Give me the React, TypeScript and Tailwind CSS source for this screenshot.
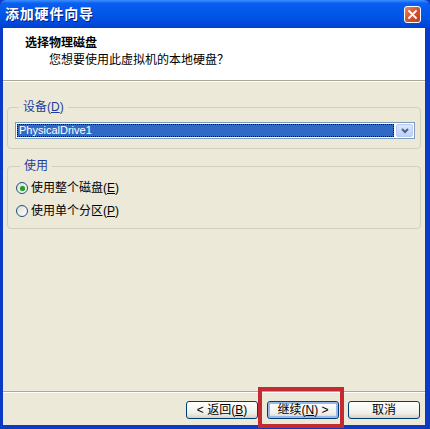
import React, { useState } from "react";

const font = "font-['Liberation_Sans','Noto_Sans_CJK_SC',sans-serif]";

const Radio = ({ checked, label, hotkey, onClick }: { checked: boolean; label: string; hotkey: string; onClick: () => void }) => (
  <button onClick={onClick} className="flex items-center gap-[3px] h-[18px] text-[12px] text-black">
    <span className="w-[12px] h-[12px] rounded-full border border-[#1c5180] bg-[linear-gradient(135deg,#dcdcd7,#ffffff)] flex items-center justify-center">
      {checked && <span className="w-[5px] h-[5px] rounded-full bg-[#21a121] shadow-[0_0_1px_#5ed05e]" />}
    </span>
    <span className="leading-none">
      {label}(<span className="underline">{hotkey}</span>)
    </span>
  </button>
);

const XpButton = ({ children, focused }: { children: React.ReactNode; focused?: boolean }) => (
  <button
    className={`w-[72px] h-[18px] rounded-[3px] border border-[#003c74] bg-[linear-gradient(to_bottom,#ffffff,#f0f0ea_70%,#d6d0c5)] text-[12px] leading-none text-black flex items-center justify-center ${
      focused ? "shadow-[inset_0_0_0_2px_#98b8ea]" : ""
    }`}
  >
    {children}
  </button>
);

export default function App() {
  const [mode, setMode] = useState<"whole" | "part">("whole");

  return (
    <div className={`relative w-[430px] h-[429px] flex flex-col bg-[#0b3bc4] ${font}`}>
      {/* title bar */}
      <div className="h-[28px] flex items-center justify-between pl-[5px] pr-[9px] rounded-t-[6px] bg-[linear-gradient(to_bottom,#3d8fff,#0a5ef0_12%,#0056e8_55%,#0049dc_85%,#0040cc)]">
        <span className="text-white font-bold text-[14px] tracking-[0.8px] [text-shadow:1px_1px_0_#0a1e7a]">添加硬件向导</span>
        <button className="w-[17px] h-[17px] rounded-[3px] border border-white bg-[linear-gradient(135deg,#eb8566,#d2542f_50%,#c13f1a)] flex items-center justify-center">
          <svg width="9" height="9" viewBox="0 0 9 9">
            <path d="M1 1 L8 8 M8 1 L1 8" stroke="white" strokeWidth="1.8" strokeLinecap="round" />
          </svg>
        </button>
      </div>

      <div className="flex-1 flex flex-col ml-[3px] mr-[5px] mb-[4px] bg-[#ece9d8]">
        {/* header */}
        <div className="h-[52px] bg-white pt-[8px] pl-[22px]">
          <div className="text-[12px] font-bold leading-[14px] text-black">选择物理磁盘</div>
          <div className="text-[12px] leading-[14px] mt-[3px] pl-[24px] text-black">您想要使用此虚拟机的本地硬盘？</div>
        </div>
        <div className="h-px bg-[#aca899]" />
        <div className="h-px bg-white" />

        {/* body */}
        <div className="flex-1 flex flex-col px-[4px] pt-[18px] gap-[10px]">
          <fieldset className="border border-[#d0d0bf] rounded-[4px] pl-[7px] pr-[5px] pb-[9px] pt-[8px]">
            <legend className="ml-[4px] px-[4px] text-[12px] leading-[14px] text-[#1f3d9c]">
              设备(<span className="underline">D</span>)
            </legend>
            <div className="h-[17px] flex border border-[#7f9db9] bg-white">
              <div className="flex-1 m-[1px] bg-[#316ac5] outline-1 outline-dotted outline-[#0b0b0b] -outline-offset-1 text-white text-[11px] leading-[13px] pl-[2px]">
                PhysicalDrive1
              </div>
              <div className="w-[17px] m-[1px] rounded-[2px] border border-[#b9cbf3] bg-[linear-gradient(to_bottom,#dbe6fd,#bcd0fb)] flex items-center justify-center">
                <svg width="8" height="6" viewBox="0 0 8 6">
                  <path d="M1 1 L4 4 L7 1" stroke="#4d6185" strokeWidth="2" fill="none" />
                </svg>
              </div>
            </div>
          </fieldset>

          <fieldset className="border border-[#d0d0bf] rounded-[4px] pl-[8px] pb-[8px] pt-[6px] flex flex-col gap-[5px]">
            <legend className="ml-[4px] px-[4px] text-[12px] leading-[14px] text-[#1f3d9c]">使用</legend>
            <Radio checked={mode === "whole"} label="使用整个磁盘" hotkey="E" onClick={() => setMode("whole")} />
            <Radio checked={mode === "part"} label="使用单个分区" hotkey="P" onClick={() => setMode("part")} />
          </fieldset>
        </div>

        {/* footer */}
        <div className="h-px bg-[#aca899]" />
        <div className="h-px bg-white" />
        <div className="h-[32px] flex items-center justify-end gap-[9px] pr-[5px] pt-[1px]">
          <XpButton>&lt; 返回(<span className="underline">B</span>)</XpButton>
          <XpButton focused>继续(<span className="underline">N</span>) &gt;</XpButton>
          <XpButton>取消</XpButton>
        </div>
      </div>

      {/* red highlight annotation */}
      <div className="absolute left-[258px] top-[387px] w-[86px] h-[41px] border-[4px] border-[#c42a2f]" />
    </div>
  );
}
